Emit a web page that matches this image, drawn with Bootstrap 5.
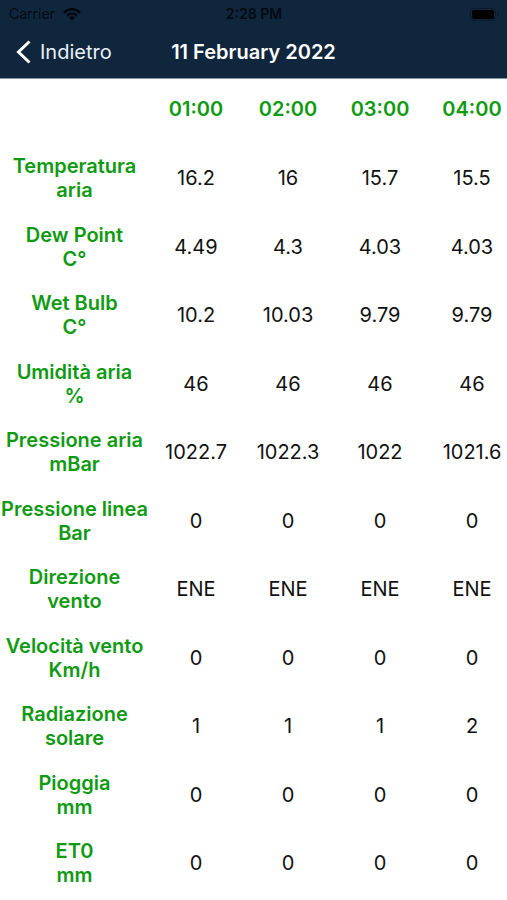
<!DOCTYPE html>
<html lang="it">
<head>
<meta charset="utf-8">
<meta name="viewport" content="width=device-width, initial-scale=1">
<title>11 February 2022</title>
<link href="https://cdn.jsdelivr.net/npm/bootstrap@5.3.0/dist/css/bootstrap.min.css" rel="stylesheet">
<style>
body { font-family: Inter, "Liberation Sans", sans-serif; color: #111; background: #fefffe; }
.app-top { background: #10263d; border-bottom: 1px solid #7f93a8; }
.status-line { height: 28px; font-size: 14px; line-height: 28px; color: #030a14; padding: 0 8px 0 9px; }
.status-line .clock { font-weight: 600; }
.title-line { height: 50px; font-size: 20px; line-height: 48px; }
.title-line h1 { font-size: 20px; line-height: 48px; font-weight: 600; }
.back-link { color: #e9f1f8; padding-left: 16px; gap: 8px; }
.readings-scroll { scrollbar-width: none; }
.readings-scroll::-webkit-scrollbar { display: none; }
.readings { table-layout: fixed; width: 100%; min-width: 518px; font-size: 20px; line-height: 24px; }
.readings .label-col { width: 150px; }
.readings th { color: #0f9a12; font-weight: 600; }
.readings tbody th { padding-right: 2px; }
.readings thead tr { height: 65px; }
.readings thead th { padding-bottom: 6px; }
.readings tbody tr { height: 68px; }
.readings tbody tr:nth-child(even) { height: 69px; }
</style>
</head>
<body>
<header class="app-top">
  <div class="status-line row g-0">
    <div class="col d-flex align-items-center gap-2">
      <span>Carrier</span>
      <svg width="18" height="13" viewBox="0 0 18 13" fill="none" stroke="#02070e" aria-hidden="true">
        <path d="M1 4.600C5.600 .2 12.400 .2 17 4.600" stroke-width="2.400"/>
        <path d="M3.900 7.600C6.800 4.900 11.200 4.900 14.100 7.600" stroke-width="2.200"/>
        <path d="M9 12.500L5.900 9.400C7.700 7.800 10.300 7.800 12.100 9.400Z" fill="#02070e" stroke="none"/>
      </svg>
    </div>
    <div class="col-auto clock">2:28 PM</div>
    <div class="col d-flex align-items-center justify-content-end">
      <svg width="29" height="13" viewBox="0 0 29 13" aria-hidden="true">
        <rect x=".5" y=".5" width="25" height="12" rx="3.500" fill="none" stroke="#0a1a2b"/>
        <rect x="2" y="2" width="22" height="9" rx="2" fill="#000"/>
        <path d="M27 4.500V8.500Q28.500 8 28.500 6.500Q28.500 5 27 4.500Z" fill="#0a1a2b"/>
      </svg>
    </div>
  </div>
  <nav class="title-line row g-0">
    <div class="col">
      <a href="#" class="back-link d-flex align-items-center text-decoration-none">
        <svg width="16" height="24" viewBox="0 0 16 24" fill="none" stroke="#fff" stroke-width="3" aria-hidden="true"><path d="M13.500 1.500L2.500 12L13.500 22.500"/></svg>
        <span>Indietro</span>
      </a>
    </div>
    <h1 class="col-auto m-0 text-white">11 February 2022</h1>
    <div class="col"></div>
  </nav>
</header>
<main class="readings-scroll overflow-auto">
  <table class="readings text-center align-middle">
    <colgroup><col class="label-col"><col><col><col><col></colgroup>
    <thead><tr><td></td><th scope="col">01:00</th><th scope="col">02:00</th><th scope="col">03:00</th><th scope="col">04:00</th></tr></thead>
    <tbody>
      <tr><th scope="row">Temperatura<br>aria</th><td>16.2</td><td>16</td><td>15.7</td><td>15.5</td></tr>
      <tr><th scope="row">Dew Point<br>C°</th><td>4.49</td><td>4.3</td><td>4.03</td><td>4.03</td></tr>
      <tr><th scope="row">Wet Bulb<br>C°</th><td>10.2</td><td>10.03</td><td>9.79</td><td>9.79</td></tr>
      <tr><th scope="row">Umidità aria<br>%</th><td>46</td><td>46</td><td>46</td><td>46</td></tr>
      <tr><th scope="row">Pressione aria<br>mBar</th><td>1022.7</td><td>1022.3</td><td>1022</td><td>1021.6</td></tr>
      <tr><th scope="row">Pressione linea<br>Bar</th><td>0</td><td>0</td><td>0</td><td>0</td></tr>
      <tr><th scope="row">Direzione<br>vento</th><td>ENE</td><td>ENE</td><td>ENE</td><td>ENE</td></tr>
      <tr><th scope="row">Velocità vento<br>Km/h</th><td>0</td><td>0</td><td>0</td><td>0</td></tr>
      <tr><th scope="row">Radiazione<br>solare</th><td>1</td><td>1</td><td>1</td><td>2</td></tr>
      <tr><th scope="row">Pioggia<br>mm</th><td>0</td><td>0</td><td>0</td><td>0</td></tr>
      <tr><th scope="row">ET0<br>mm</th><td>0</td><td>0</td><td>0</td><td>0</td></tr>
    </tbody>
  </table>
</main>
<script src="https://cdn.jsdelivr.net/npm/bootstrap@5.3.0/dist/js/bootstrap.bundle.min.js"></script>
</body>
</html>
